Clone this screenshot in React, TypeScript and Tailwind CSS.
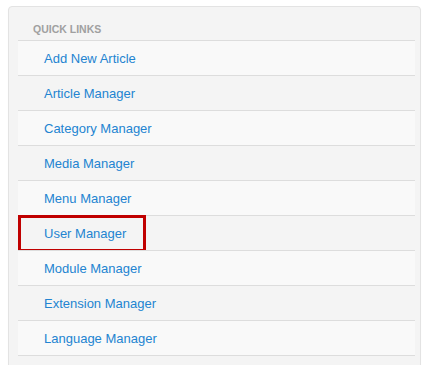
const links = [
  "Add New Article",
  "Article Manager",
  "Category Manager",
  "Media Manager",
  "Menu Manager",
  "User Manager",
  "Module Manager",
  "Extension Manager",
  "Language Manager",
]

export default function App() {
  return (
    <div className="min-h-[365px] bg-white pl-2 pt-[6px] font-['Liberation_Sans',Arial,sans-serif]">
      <div className="w-[413px] rounded-[4px] border border-[#e3e3e3] bg-[#f4f4f4] pb-6 pl-[9px] pt-[11px] shadow-[0_1px_1px_rgba(0,0,0,0.05)]">
        {/* header */}
        <div className="pl-[15px] pt-px text-[10.5px] font-bold uppercase leading-[21px] text-[#a0a0a0]">
          Quick Links
        </div>
        <ul className="w-[397px] border-b border-[#dddddd]">
          {links.map((label, i) => (
            <li
              key={label}
              className={`relative flex h-[35px] items-center border-t border-[#dddddd] pl-[26px] pt-[2px] text-[13px] text-[#2384d1] ${
                i % 2 === 0 ? "bg-[#f9f9f9]" : "bg-[#f4f4f4]"
              }`}
            >
              <a href="#">{label}</a>
              {label === "User Manager" && (
                <span className="pointer-events-none absolute left-0 top-[-1px] h-[37px] w-[128px] border-[3px] border-[#c00000]" />
              )}
            </li>
          ))}
        </ul>
      </div>
    </div>
  )
}
